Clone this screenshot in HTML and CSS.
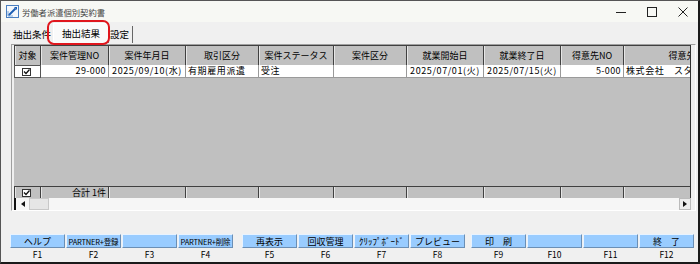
FILE: index.html
```html
<!DOCTYPE html>
<html>
  <head>
    <meta charset="utf-8" />
    <title>労働者派遣個別契約書</title>
    <link rel="stylesheet" href="styles.css">
  </head>
  <body>
    <div class="window">
      <div class="titlebar">
        <svg class="app-icon" width="13" height="13" viewBox="0 0 13 13">
          <rect x="0.5" y="0.5" width="12" height="12" fill="#f4f8fc" stroke="#4a7fc0" />
          <path d="M2.5 10.5 L9.5 3.5" stroke="#1d5fb4" stroke-width="2" />
          <path d="M8 2 L11 2 L11 5 Z" fill="#1d5fb4" />
          <path d="M2 6 L2 11 L7 11" fill="none" stroke="#7fa8d8" />
        </svg>
        <span class="title">労働者派遣個別契約書</span>
        <div class="controls">
          <svg width="12" height="12" viewBox="0 0 12 12"><path d="M1 6.5 H11" stroke="#222" /></svg>
          <svg width="12" height="12" viewBox="0 0 12 12"><rect x="1.5" y="1.5" width="9" height="9" fill="none" stroke="#222" /></svg>
          <svg width="12" height="12" viewBox="0 0 12 12"><path d="M1.5 1.5 L10.5 10.5 M10.5 1.5 L1.5 10.5" stroke="#222" /></svg>
        </div>
      </div>

      <div class="tabs">
        <span class="tab">抽出条件</span>
        <span class="tab active">抽出結果</span>
        <span class="tab last">設定</span>
      </div>
      <div class="highlight"></div>

      <div class="grid-frame">
        <div class="grid">
          <div class="row head">
            <div class="cell">対象</div>
            <div class="cell">案件管理NO</div>
            <div class="cell">案件年月日</div>
            <div class="cell">取引区分</div>
            <div class="cell">案件ステータス</div>
            <div class="cell">案件区分</div>
            <div class="cell">就業開始日</div>
            <div class="cell">就業終了日</div>
            <div class="cell">得意先NO</div>
            <div class="cell">得意先名</div>
          </div>
          <div class="row data">
            <div class="cell check-cell"><svg width="9" height="8" viewBox="0 0 9 8"><rect x="0.5" y="0.5" width="8" height="7" fill="#fff" stroke="#333" /><path d="M2 3.5 L4 5.5 L7.5 1.5" fill="none" stroke="#111" stroke-width="1.3" /></svg></div>
            <div class="cell right">29-000</div>
            <div class="cell center">2025/09/10(水)</div>
            <div class="cell">有期雇用派遣</div>
            <div class="cell">受注</div>
            <div class="cell"></div>
            <div class="cell center">2025/07/01(火)</div>
            <div class="cell center">2025/07/15(火)</div>
            <div class="cell right">5-000</div>
            <div class="cell">株式会社　スタッフ</div>
          </div>
          <div class="grid-empty"></div>
          <div class="row foot">
            <div class="cell check-cell"><svg width="9" height="8" viewBox="0 0 9 8"><rect x="0.5" y="0.5" width="8" height="7" fill="#fff" stroke="#333" /><path d="M2 3.5 L4 5.5 L7.5 1.5" fill="none" stroke="#111" stroke-width="1.3" /></svg></div>
            <div class="cell right">合計 1件</div>
            <div class="cell"></div>
            <div class="cell"></div>
            <div class="cell"></div>
            <div class="cell"></div>
            <div class="cell"></div>
            <div class="cell"></div>
            <div class="cell"></div>
            <div class="cell"></div>
          </div>
        </div>
        <div class="hscroll">
          <span class="sb-btn sb-left"><svg width="4" height="6" viewBox="0 0 4 6"><path d="M4 0 L0 3 L4 6 Z" fill="#111" /></svg></span>
          <span class="sb-thumb"></span>
          <span class="sb-track"></span>
          <span class="sb-btn sb-right"><svg width="4" height="6" viewBox="0 0 4 6"><path d="M0 0 L4 3 L0 6 Z" fill="#111" /></svg></span>
        </div>
      </div>

      <div class="fkeys">
        <div class="fgroup">
          <div class="fkey"><div class="fbtn">ヘルプ</div><div class="flabel">F1</div></div>
          <div class="fkey"><div class="fbtn narrow">PARTNER+登録</div><div class="flabel">F2</div></div>
          <div class="fkey"><div class="fbtn"></div><div class="flabel">F3</div></div>
          <div class="fkey"><div class="fbtn narrow">PARTNER+削除</div><div class="flabel">F4</div></div>
        </div>
        <div class="fgroup">
          <div class="fkey"><div class="fbtn">再表示</div><div class="flabel">F5</div></div>
          <div class="fkey"><div class="fbtn">回収管理</div><div class="flabel">F6</div></div>
          <div class="fkey"><div class="fbtn">ｸﾘｯﾌﾟﾎﾞｰﾄﾞ</div><div class="flabel">F7</div></div>
          <div class="fkey"><div class="fbtn">プレビュー</div><div class="flabel">F8</div></div>
        </div>
        <div class="fgroup last">
          <div class="fkey"><div class="fbtn">印　刷</div><div class="flabel">F9</div></div>
          <div class="fkey"><div class="fbtn"></div><div class="flabel">F10</div></div>
          <div class="fkey"><div class="fbtn"></div><div class="flabel">F11</div></div>
          <div class="fkey"><div class="fbtn">終　了</div><div class="flabel">F12</div></div>
        </div>
      </div>
    </div>
  </body>
</html>
```

FILE: styles.css
```css
body {
  margin: 0;
  background: #fff;
  font-family: "Noto Sans CJK JP", "Noto Sans", sans-serif;
  color: #111;
}

.window {
  position: relative;
  width: 700px;
  height: 264px;
  box-sizing: border-box;
  border: 1px solid #555;
  border-right: 2px solid #1a1a1a;
  border-bottom: 2px solid #1a1a1a;
  background: #f0f0f0;
  overflow: hidden;
}

/* title bar */
.titlebar {
  height: 21px;
  display: flex;
  align-items: center;
  padding-left: 5px;
  background: #f7f8f4;
}
.app-icon {
  flex: none;
}
.title {
  margin-left: 3px;
  font-size: 8.3px;
  color: #444;
}
.controls {
  margin-left: auto;
  display: flex;
  gap: 19px;
  padding-right: 9px;
  padding-top: 1px;
}

/* tabs */
.tabs {
  height: 21px;
  display: flex;
  align-items: flex-end;
  padding-left: 9px;
  font-size: 9.5px;
  color: #000;
}
.tab {
  height: 17px;
  line-height: 17px;
  padding: 0 2px 0 3px;
}
.tab.active {
  height: 19px;
  line-height: 18px;
  padding: 0 8px;
  background: #fafafa;
  border-left: 1px solid #fff;
  border-right: 1px solid #777;
  border-top: 1px solid #fff;
}
.tab.last {
  border-right: 1px solid #666;
  padding: 0 3px 0 1px;
}
.highlight {
  position: absolute;
  left: 46px;
  top: 19px;
  width: 59px;
  height: 21px;
  border: 2px solid #e0161d;
  border-radius: 7px;
}

/* grid */
.grid-frame {
  width: 685px;
  margin: 1px 0 0 10px;
  box-sizing: border-box;
  border: 1px solid;
  border-color: #a0a0a0 #fff #fff #a0a0a0;
  padding: 0 4px 0 2px;
  font-size: 9px;
  color: #000;
}
.grid {
  width: 677px;
  overflow: hidden;
  background: #c0c0c0;
  border-right: 1px solid #333;
  box-sizing: border-box;
}
.row {
  display: grid;
  grid-template-columns: 27px 68px 77px 73px 75px 73px 77px 77px 63px 126px;
  width: 736px;
}
.cell {
  box-sizing: border-box;
  white-space: nowrap;
  overflow: hidden;
  padding: 0 2px;
}
.cell.right {
  text-align: right;
}
.cell.center {
  text-align: center;
}

.head {
  height: 20px;
  border-top: 1px solid #404040;
  box-sizing: border-box;
}
.head .cell {
  line-height: 19px;
  text-align: center;
  border-right: 1px solid #404040;
  box-shadow: inset 1px 0 #e6e6e6;
}
.head .cell:first-child {
  border-left: 1px solid #404040;
}

.data {
  height: 13px;
  background: #fff;
  letter-spacing: 0.6px;
}
.data .cell {
  line-height: 12px;
  border-right: 1px solid #9a9a9a;
  border-bottom: 1px solid #9a9a9a;
}
.data .cell.right {
  padding-right: 2px;
  letter-spacing: 0.4px;
}
.check-cell {
  display: flex;
  align-items: center;
  padding-left: 7px;
}
.check-cell svg {
  display: block;
}
.data .check-cell {
  border: 1px solid #555;
  background: #fff;
}

.grid-empty {
  height: 108px;
}

.foot {
  height: 11px;
  border-top: 1px solid #404040;
  box-sizing: content-box;
}
.foot .cell {
  line-height: 11px;
  border-right: 1px solid #404040;
  box-shadow: inset 1px 0 #e6e6e6;
}
.foot .check-cell {
  border-left: 1px solid #404040;
}

/* horizontal scrollbar */
.hscroll {
  height: 12px;
  display: flex;
  background: #f6f6f6;
  width: 677px;
}
.sb-btn {
  width: 12px;
  display: flex;
  align-items: center;
  justify-content: center;
  box-sizing: border-box;
}
.sb-left {
  border-left: 2px solid #111;
  width: 15px;
}
.sb-right {
  border: 1px solid #bbb;
  background: #ececec;
}
.sb-thumb {
  width: 20px;
  background: #e6e6e6;
  border: 1px solid #c8c8c8;
  box-sizing: border-box;
}
.sb-track {
  flex: 1;
}

/* function keys */
.fkeys {
  display: flex;
  padding-left: 9px;
  margin-top: 23px;
}
.fgroup {
  display: grid;
  grid-template-columns: repeat(4, 55px);
  gap: 1px;
  margin-right: 9px;
}
.fgroup.last {
  margin-right: 0;
  margin-left: -3px;
}
.fbtn {
  height: 14px;
  line-height: 13px;
  box-sizing: border-box;
  background: #99ccff;
  border: 1px solid;
  border-color: #e8f3ff #6b8fb5 #6b8fb5 #e8f3ff;
  text-align: center;
  font-size: 9px;
  color: #000;
  white-space: nowrap;
  overflow: hidden;
}
.fbtn.narrow {
  font-size: 7.5px;
  letter-spacing: -0.2px;
}
.flabel {
  height: 12px;
  line-height: 13px;
  text-align: center;
  font-size: 8.5px;
  color: #000;
}
```
